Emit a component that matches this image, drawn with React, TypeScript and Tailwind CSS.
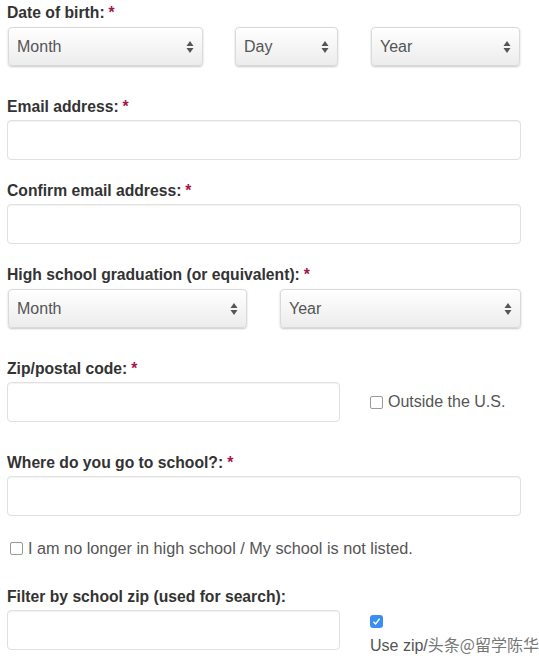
const font = "font-['Liberation_Sans','Helvetica',Arial,sans-serif]";

function Label({ text, required = true }: { text: string; required?: boolean }) {
  return (
    <div className="h-5 text-[15.7px] leading-5 font-bold text-[#333]">
      {text}
      {required && <span className="ml-[4px] text-[#a3164a]">*</span>}
    </div>
  );
}

function Arrows() {
  return (
    <svg width="8" height="14" viewBox="0 0 8 14" className="shrink-0">
      <path d="M4 1 L7.5 6 L0.5 6 Z" fill="#555" />
      <path d="M4 13 L7.5 8 L0.5 8 Z" fill="#555" />
    </svg>
  );
}

function FakeSelect({ value, className }: { value: string; className: string }) {
  return (
    <div
      className={`flex h-[39px] items-center justify-between rounded-[4px] border border-[#dadada] bg-gradient-to-b from-white to-[#ececec] pl-[8px] pr-[8px] text-[16px] text-[#555] shadow-[0_1px_2px_rgba(0,0,0,0.22)] ${className}`}
    >
      <span>{value}</span>
      <Arrows />
    </div>
  );
}

function TextInput({ className = "w-[514px]" }: { className?: string }) {
  return (
    <div
      className={`h-[40px] rounded-[4px] border border-[#e0e0e0] bg-white shadow-[inset_0_1px_1px_rgba(0,0,0,0.05)] ${className}`}
    />
  );
}

function Checkbox({ checked = false }: { checked?: boolean }) {
  if (checked) {
    return (
      <div className="flex h-[13px] w-[13px] items-center justify-center rounded-[3px] bg-[#3a8ef0]">
        <svg width="9" height="9" viewBox="0 0 9 9">
          <path d="M1.5 4.8 L3.6 7 L7.6 1.8" stroke="#fff" strokeWidth="1.4" fill="none" />
        </svg>
      </div>
    );
  }
  return <div className="h-[13px] w-[13px] rounded-[2px] border border-[#9a9a9a] bg-white" />;
}

export default function App() {
  return (
    <div className={`${font} h-[665px] w-[539px] overflow-hidden bg-white pl-[7px] pt-[3px]`}>
      {/* Date of birth */}
      <Label text="Date of birth:" />
      <div className="mt-[4px] flex pl-[1px]">
        <FakeSelect value="Month" className="w-[195px]" />
        <FakeSelect value="Day" className="ml-[32px] w-[103px]" />
        <FakeSelect value="Year" className="ml-[33px] w-[149px]" />
      </div>

      <div className="mt-[31px]">
        <Label text="Email address:" />
      </div>
      <div className="mt-[3px]">
        <TextInput />
      </div>

      <div className="mt-[21px]">
        <Label text="Confirm email address:" />
      </div>
      <div className="mt-[3px]">
        <TextInput />
      </div>

      <div className="mt-[21px]">
        <Label text="High school graduation (or equivalent):" />
      </div>
      <div className="mt-[4px] flex pl-[1px]">
        <FakeSelect value="Month" className="w-[239px]" />
        <FakeSelect value="Year" className="ml-[33px] w-[241px]" />
      </div>

      <div className="mt-[31px]">
        <Label text="Zip/postal code:" />
      </div>
      <div className="mt-[3px] flex items-center">
        <TextInput className="w-[333px]" />
        <div className="ml-[30px] flex items-center gap-[5px] text-[16px] text-[#555]">
          <Checkbox />
          <span>Outside the U.S.</span>
        </div>
      </div>

      <div className="mt-[31px]">
        <Label text="Where do you go to school?:" />
      </div>
      <div className="mt-[3px]">
        <TextInput />
      </div>

      <div className="mt-[22px] flex h-5 items-center gap-[5px] pl-[3px] text-[16.25px] text-[#555]">
        <Checkbox />
        <span>I am no longer in high school / My school is not listed.</span>
      </div>

      <div className="mt-[29px]">
        <Label text="Filter by school zip (used for search):" required={false} />
      </div>
      <div className="mt-[3px] flex">
        <TextInput className="w-[333px]" />
        <div className="ml-[30px] flex flex-col pt-[5px] text-[16px] text-[#555]">
          <Checkbox checked />
          <span className="mt-[6px] leading-5">
            Use zip/<span className="font-['Noto_Sans_CJK_SC',sans-serif] text-[#777]">头条@留学陈华</span>
          </span>
        </div>
      </div>
    </div>
  );
}
